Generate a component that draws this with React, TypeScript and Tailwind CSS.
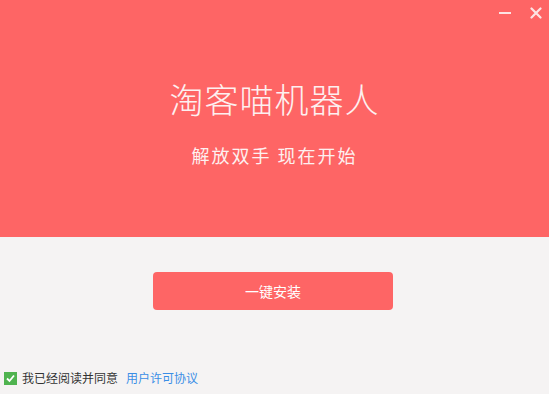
import React, { useState } from 'react';

export default function App() {
  const [agreed, setAgreed] = useState(true);

  return (
    <div
      className="w-[549px] h-[394px] flex flex-col bg-[#f5f3f3] overflow-hidden"
      style={{ fontFamily: '"Noto Sans CJK SC", "Microsoft YaHei", sans-serif' }}
    >
      <div className="relative h-[237px] bg-[#fe6565] flex flex-col items-center text-white">
        <div className="absolute top-[4px] right-[2px] flex items-center gap-[9px]">
          <button className="w-[22px] h-[18px] flex items-center justify-center">
            <span className="block w-[12px] h-[2px] bg-[#fde3e3]" />
          </button>
          <button className="w-[22px] h-[18px] flex items-center justify-center">
            <svg width="12" height="12" viewBox="0 0 12 12">
              <path d="M1.5 1.5 L10.5 10.5 M10.5 1.5 L1.5 10.5" stroke="#fde3e3" strokeWidth="2.2" strokeLinecap="round" />
            </svg>
          </button>
        </div>
        <h1 className="mt-[76px] text-[34px] leading-[46px] font-extralight tracking-[1px] text-[#fdf0f0]">
          淘客喵机器人
        </h1>
        <p className="mt-[20px] text-[18px] leading-[26px] tracking-[2px] text-[#fdf0f0]">
          解放双手 现在开始
        </p>
      </div>

      <div className="flex-1 flex flex-col items-center">
        <button className="mt-[35px] mr-[3px] w-[240px] h-[38px] rounded-[4px] bg-[#fe6565] text-white text-[14px]">
          一键安装
        </button>
      </div>

      <div className="h-[30px] flex items-center pl-[4px] pb-[2px] text-[12px]">
        <button
          onClick={() => setAgreed(!agreed)}
          className={`w-[13px] h-[13px] flex items-center justify-center ${agreed ? 'bg-[#4fb34f]' : 'bg-white border border-gray-400'}`}
        >
          {agreed && (
            <svg width="11" height="11" viewBox="0 0 11 11">
              <path d="M2 5.5 L4.5 8 L9 2.5" stroke="white" strokeWidth="1.8" fill="none" />
            </svg>
          )}
        </button>
        <span className="ml-[5px] text-[#333333]">我已经阅读并同意</span>
        <a className="ml-[8px] text-[#3a8ee6]">用户许可协议</a>
      </div>
    </div>
  );
}
